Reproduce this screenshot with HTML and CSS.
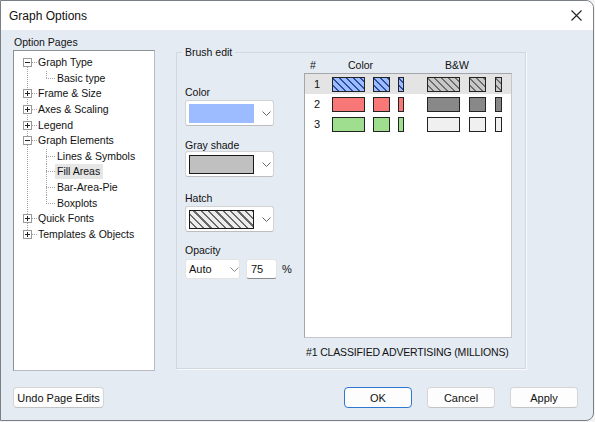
FILE: index.html
```html
<!DOCTYPE html>
<html>
<head>
<meta charset="utf-8">
<link rel="stylesheet" href="styles.css">
</head>
<body>
<div class="window">
  <div class="titlebar">
    <span class="title">Graph Options</span>
    <svg class="close" width="11" height="11" viewBox="0 0 11 11"><path d="M0.5 0.5L10.5 10.5M10.5 0.5L0.5 10.5" stroke="#222" stroke-width="1.1" fill="none"/></svg>
  </div>
  <div class="body">
    <div class="main">
      <div class="pages">
        <div class="pages-label">Option Pages</div>
        <div class="treebox">
          <ul class="tree">
            <li>
              <div class="row"><svg class="exp" width="9" height="9"><rect x="0.5" y="0.5" width="8" height="8" fill="#fff" stroke="#999"/><path d="M2 4.5h5" stroke="#222"/></svg><span class="hdash"></span><span class="lbl">Graph Type</span></div>
              <ul class="kids">
                <li class="last"><div class="row child"><span class="elbow"></span><span class="lbl">Basic type</span></div></li>
              </ul>
            </li>
            <li><div class="row"><svg class="exp" width="9" height="9"><rect x="0.5" y="0.5" width="8" height="8" fill="#fff" stroke="#999"/><path d="M2 4.5h5M4.5 2v5" stroke="#222"/></svg><span class="hdash"></span><span class="lbl">Frame &amp; Size</span></div></li>
            <li><div class="row"><svg class="exp" width="9" height="9"><rect x="0.5" y="0.5" width="8" height="8" fill="#fff" stroke="#999"/><path d="M2 4.5h5M4.5 2v5" stroke="#222"/></svg><span class="hdash"></span><span class="lbl">Axes &amp; Scaling</span></div></li>
            <li><div class="row"><svg class="exp" width="9" height="9"><rect x="0.5" y="0.5" width="8" height="8" fill="#fff" stroke="#999"/><path d="M2 4.5h5M4.5 2v5" stroke="#222"/></svg><span class="hdash"></span><span class="lbl">Legend</span></div></li>
            <li>
              <div class="row"><svg class="exp" width="9" height="9"><rect x="0.5" y="0.5" width="8" height="8" fill="#fff" stroke="#999"/><path d="M2 4.5h5" stroke="#222"/></svg><span class="hdash"></span><span class="lbl">Graph Elements</span></div>
              <ul class="kids">
                <li><div class="row child"><span class="elbow"></span><span class="lbl">Lines &amp; Symbols</span></div></li>
                <li><div class="row child"><span class="elbow"></span><span class="lbl sel">Fill Areas</span></div></li>
                <li><div class="row child"><span class="elbow"></span><span class="lbl">Bar-Area-Pie</span></div></li>
                <li class="last"><div class="row child"><span class="elbow"></span><span class="lbl">Boxplots</span></div></li>
              </ul>
            </li>
            <li><div class="row"><svg class="exp" width="9" height="9"><rect x="0.5" y="0.5" width="8" height="8" fill="#fff" stroke="#999"/><path d="M2 4.5h5M4.5 2v5" stroke="#222"/></svg><span class="hdash"></span><span class="lbl">Quick Fonts</span></div></li>
            <li><div class="row"><svg class="exp" width="9" height="9"><rect x="0.5" y="0.5" width="8" height="8" fill="#fff" stroke="#999"/><path d="M2 4.5h5M4.5 2v5" stroke="#222"/></svg><span class="hdash"></span><span class="lbl">Templates &amp; Objects</span></div></li>
          </ul>
        </div>
      </div>

      <fieldset class="brush">
        <legend>Brush edit</legend>
        <div class="brush-inner">
          <div class="controls">
            <div class="flabel l-color">Color</div>
            <div class="combo"><span class="sw sw-color"></span><svg class="chev" width="9" height="5"><path d="M0.5 0.5L4.5 4.5L8.5 0.5" stroke="#666" fill="none"/></svg></div>
            <div class="flabel l-gray">Gray shade</div>
            <div class="combo"><span class="sw sw-gray"></span><svg class="chev" width="9" height="5"><path d="M0.5 0.5L4.5 4.5L8.5 0.5" stroke="#666" fill="none"/></svg></div>
            <div class="flabel l-hatch">Hatch</div>
            <div class="combo"><span class="sw sw-hatch"></span><svg class="chev" width="9" height="5"><path d="M0.5 0.5L4.5 4.5L8.5 0.5" stroke="#666" fill="none"/></svg></div>
            <div class="flabel l-opac">Opacity</div>
            <div class="opac-row">
              <div class="combo small"><span class="combo-text">Auto</span><svg class="chev" width="9" height="5"><path d="M0.5 0.5L4.5 4.5L8.5 0.5" stroke="#888" fill="none"/></svg></div>
              <div class="edit">75</div>
              <span class="pct">%</span>
            </div>
          </div>
          <div class="tablecol">
            <div class="thead"><span class="h-num">#</span><span class="h-color">Color</span><span class="h-bw">B&amp;W</span></div>
            <div class="table">
              <div class="trow selrow">
                <span class="num">1</span>
                <span class="s big hatch-blue"></span><span class="s med hatch-blue"></span><span class="s sm hatch-blue"></span>
                <span class="s big bw hatch-gray"></span><span class="s med hatch-gray"></span><span class="s sm hatch-gray"></span>
              </div>
              <div class="trow">
                <span class="num">2</span>
                <span class="s big red"></span><span class="s med red"></span><span class="s sm red"></span>
                <span class="s big bw dgray"></span><span class="s med dgray"></span><span class="s sm dgray"></span>
              </div>
              <div class="trow">
                <span class="num">3</span>
                <span class="s big green"></span><span class="s med green"></span><span class="s sm green"></span>
                <span class="s big bw white"></span><span class="s med white"></span><span class="s sm white"></span>
              </div>
            </div>
            <div class="caption">#1 CLASSIFIED ADVERTISING (MILLIONS)</div>
          </div>
        </div>
      </fieldset>
    </div>

    <div class="footer">
      <button class="btn undo">Undo Page Edits</button>
      <span class="spacer"></span>
      <button class="btn ok">OK</button>
      <button class="btn cancel">Cancel</button>
      <button class="btn apply">Apply</button>
    </div>
  </div>
</div>
</body>
</html>
```

FILE: styles.css
```css
* { box-sizing: border-box; }
html, body { margin: 0; padding: 0; }
body {
  background: #f3f3f3;
  font-family: "Liberation Sans", Arial, sans-serif;
  font-size: 10.5px;
  color: #111;
}
.window {
  width: 594px;
  height: 421px;
  border: 1px solid #7a7f86;
  border-radius: 0 8px 8px 0;
  background: #e5ebf3;
  overflow: hidden;
  display: flex;
  flex-direction: column;
}
.titlebar {
  height: 29px;
  background: #ffffff;
  display: flex;
  align-items: center;
  padding: 0 10px 0 8px;
  flex: none;
}
.title {
  font-size: 12px;
  color: #111;
  flex: 1;
  padding-top: 1px;
}
.close { margin-right: 1px; }
.body { flex: 1; display: flex; flex-direction: column; }
.main {
  display: flex;
  align-items: flex-start;
  padding: 5px 0 0 12px;
}
.pages { width: 142px; flex: none; }
.pages-label {
  height: 15px;
  line-height: 14px;
  margin-left: 1px;
}
.treebox {
  height: 321px;
  background: #fff;
  border: 1px solid #8c8f94;
  border-right-color: #b8bcc2;
  border-bottom-color: #b8bcc2;
}
.tree, .kids { list-style: none; margin: 0; padding: 0; }
.tree {
  padding-top: 4px;
  background: repeating-linear-gradient(to bottom, #a0a0a0 0 1px, transparent 1px 2px) 13px 12px / 1px 171px no-repeat;
}
.row {
  height: 15.6px;
  display: flex;
  align-items: center;
  white-space: nowrap;
}
.exp { margin-left: 9px; flex: none; }
.hdash {
  width: 5px;
  height: 1px;
  flex: none;
  background: repeating-linear-gradient(to right, #a0a0a0 0 1px, transparent 1px 2px);
}
.lbl {
  padding: 0 2px 0 1px;
  line-height: 15px;
}
.row.child { padding-left: 32px; }
.row.child .lbl { padding: 0 3px 0 2px; }
.elbow {
  width: 9px;
  align-self: stretch;
  flex: none;
  background:
    repeating-linear-gradient(to bottom, #a0a0a0 0 1px, transparent 1px 2px) 0 0 / 1px 100% no-repeat,
    repeating-linear-gradient(to right, #a0a0a0 0 1px, transparent 1px 2px) 0 50% / 100% 1px no-repeat;
}
.last .elbow {
  background:
    repeating-linear-gradient(to bottom, #a0a0a0 0 1px, transparent 1px 2px) 0 0 / 1px 50% no-repeat,
    repeating-linear-gradient(to right, #a0a0a0 0 1px, transparent 1px 2px) 0 50% / 100% 1px no-repeat;
}
.lbl.sel { background: #e6e6e6; }

/* brush edit group */
.brush {
  margin: 11px 0 0 21px;
  padding: 0;
  width: 350px;
  height: 323px;
  min-width: 0;
  border: 1px solid #d2d8e0;
  box-shadow: 1px 1px 0 #f7f9fc;
}
.brush legend {
  padding: 0 3px;
  margin-left: 5px;
  line-height: 12px;
  font-size: 10.5px;
}
.brush-inner {
  display: flex;
  padding-left: 8px;
}
.controls { width: 119px; flex: none; }
.flabel { height: 12px; line-height: 12px; }
.l-color { margin-top: 28px; margin-bottom: 2px; }
.l-gray { margin-top: 13px; }
.l-hatch { margin-top: 15px; margin-bottom: 2px; }
.l-opac { margin-top: 12px; margin-bottom: 3px; }
.combo {
  width: 89px;
  height: 26px;
  background: #fff;
  border: 1px solid #d3d3d3;
  border-bottom-color: #bdbdbd;
  border-radius: 3px;
  display: flex;
  align-items: center;
  padding-left: 3px;
}
.sw {
  width: 65px;
  height: 19px;
  flex: none;
}
.sw-color { background: #9cbcff; }
.sw-gray { background: #c0c0c0; border: 1px solid #1a1a1a; }
.sw-hatch {
  border: 1px solid #1a1a1a;
  background: repeating-linear-gradient(45deg, #ededed 0 3.6px, #6a6a6a 3.6px 5.2px);
}
.chev { margin-left: 8px; flex: none; }
.opac-row { display: flex; align-items: center; }
.combo.small {
  width: 55px;
  height: 20px;
  border-color: #e3e3e3;
  padding-left: 3px;
}
.combo-text { width: 37px; font-size: 11px; }
.combo.small .chev { margin-left: 4px; }
.edit {
  width: 31px;
  height: 20px;
  margin-left: 6px;
  background: #fff;
  border: 1px solid #e3e3e3;
  border-bottom: 1px solid #8a8a8a;
  border-radius: 3px;
  padding-left: 4px;
  line-height: 18px;
  font-size: 11px;
}
.pct { margin-left: 5px; font-size: 11px; }

.tablecol { width: 208px; flex: none; }
.thead {
  height: 15px;
  line-height: 14px;
  display: flex;
}
.h-num { margin-left: 6px; width: 38px; }
.h-color { width: 97px; }
.table {
  height: 265px;
  background: #fff;
  border: 1px solid #a3a6ab;
  border-right-color: #c4c7cc;
  border-bottom-color: #c4c7cc;
}
.trow {
  height: 20px;
  display: flex;
  align-items: center;
}
.selrow { background: #e4e4e4; }
.num {
  width: 27px;
  padding-left: 9px;
  font-size: 11px;
  flex: none;
}
.s {
  height: 15px;
  border: 1px solid #222;
  flex: none;
  margin-left: 8px;
}
.s.big { width: 33px; margin-left: 0; }
.s.med { width: 17px; }
.s.sm { width: 6px; }
.s.big.bw { margin-left: 23px; }
.s.big.bw ~ .s.med { margin-left: 9px; }
.s.big.bw ~ .s.sm { width: 7px; margin-left: 9px; }
.hatch-blue { background: repeating-linear-gradient(45deg, #9cbcff 0 3.4px, #2c4c9c 3.4px 4.9px); }
.hatch-gray { background: repeating-linear-gradient(45deg, #c8c8c8 0 3.4px, #6e6e6e 3.4px 4.9px); }
.red { background: #f87878; }
.green { background: #9ede8e; }
.dgray { background: #888888; }
.white { background: #f0f0f0; }
.caption {
  margin-top: 7px;
  line-height: 14px;
  padding-left: 2px;
  letter-spacing: -0.15px;
  white-space: nowrap;
}

/* footer */
.footer {
  display: flex;
  align-items: center;
  padding: 16px 15px 0 12px;
}
.spacer { flex: 1; }
.btn {
  height: 21px;
  background: #fdfdfd;
  border: 1px solid #d5d5d5;
  border-bottom-color: #c4c4c4;
  border-radius: 4px;
  font-family: "Liberation Sans", Arial, sans-serif;
  font-size: 11px;
  color: #111;
  padding: 0;
}
.undo { width: 91px; }
.ok { width: 68px; border: 1px solid #2f78cf; }
.cancel { width: 68px; margin-left: 15px; }
.apply { width: 68px; margin-left: 15px; }
```
